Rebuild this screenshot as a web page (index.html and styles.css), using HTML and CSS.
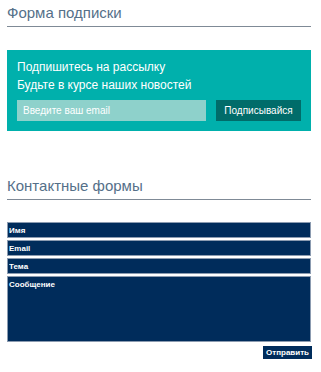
FILE: index.html
```html
<!DOCTYPE html>
<html lang="ru">
<head>
    <meta charset="UTF-8">
    <meta name="viewport" content="width=device-width, initial-scale=1.0">
    <title>Формы</title>
    <link rel="stylesheet" href="styles.css">
</head>
<body>

    <div class="page">

        <!-- подписка -->
        <h2 class="section-title">Форма подписки</h2>
        <div class="subscribe-box">
            <p class="subscribe-text">Подпишитесь на рассылку</p>
            <p class="subscribe-text">Будьте в курсе наших новостей</p>
            <form class="subscribe-form">
                <input type="email" class="subscribe-input" placeholder="Введите ваш email">
                <button type="submit" class="subscribe-button">Подписывайся</button>
            </form>
        </div>

        <!-- контакты -->
        <h2 class="section-title contact-title">Контактные формы</h2>
        <form class="contact-form">
            <input type="text" class="contact-field" placeholder="Имя">
            <input type="email" class="contact-field" placeholder="Email">
            <input type="text" class="contact-field" placeholder="Тема">
            <textarea class="contact-field contact-message" placeholder="Сообщение"></textarea>
            <div class="contact-actions">
                <button type="submit" class="contact-button">Отправить</button>
            </div>
        </form>

    </div>

</body>
</html>
```

FILE: styles.css
```css
body {
    margin: 0;
    padding: 0;
    font-family: "Liberation Sans", Arial, sans-serif;
    background-color: #fff;
}

.page {
    width: 304px;
    margin-left: 7px;
}

/* заголовки секций */
.section-title {
    margin: 4px 0 0;
    padding-bottom: 4px;
    font-size: 15px;
    font-weight: normal;
    line-height: 18px;
    color: #557089;
    border-bottom: 1px solid #7f8a96;
}

.contact-title {
    margin-top: 46px;
}

/* блок подписки */
.subscribe-box {
    margin-top: 23px;
    padding: 8px 10px 10px;
    background-color: #00b0ac;
}

.subscribe-text {
    margin: 0;
    font-size: 12px;
    line-height: 18px;
    color: #fff;
}

.subscribe-form {
    display: flex;
    gap: 10px;
    margin-top: 6px;
}

.subscribe-input {
    flex: 1;
    height: 21px;
    padding: 0 6px;
    border: none;
    outline: none;
    box-sizing: border-box;
    background-color: #8ed1cb;
    color: #fff;
    font-family: inherit;
    font-size: 10px;
}

.subscribe-input::placeholder {
    color: #fff;
    opacity: 1;
}

.subscribe-button {
    width: 85px;
    height: 21px;
    padding: 0;
    border: none;
    background-color: #006c6a;
    color: #fff;
    font-family: inherit;
    font-size: 10px;
    cursor: pointer;
}

/* контактная форма */
.contact-form {
    margin-top: 22px;
}

.contact-field {
    display: block;
    width: 100%;
    height: 16px;
    margin: 0 0 2px;
    padding: 0 1px;
    box-sizing: border-box;
    border: 1px solid #8b9bb0;
    outline: none;
    background-color: #002c5b;
    color: #fff;
    font-family: inherit;
    font-size: 8px;
    font-weight: bold;
}

.contact-field::placeholder {
    color: #fff;
    opacity: 1;
}

.contact-message {
    height: 66px;
    padding-top: 3px;
    resize: none;
}

.contact-actions {
    display: flex;
    justify-content: flex-end;
    margin-top: 4px;
    margin-right: -1px;
}

.contact-button {
    height: 13px;
    padding: 0 3px;
    border: none;
    background-color: #002c5b;
    color: #fff;
    font-family: inherit;
    font-size: 8px;
    font-weight: bold;
    line-height: 13px;
    cursor: pointer;
}
```
